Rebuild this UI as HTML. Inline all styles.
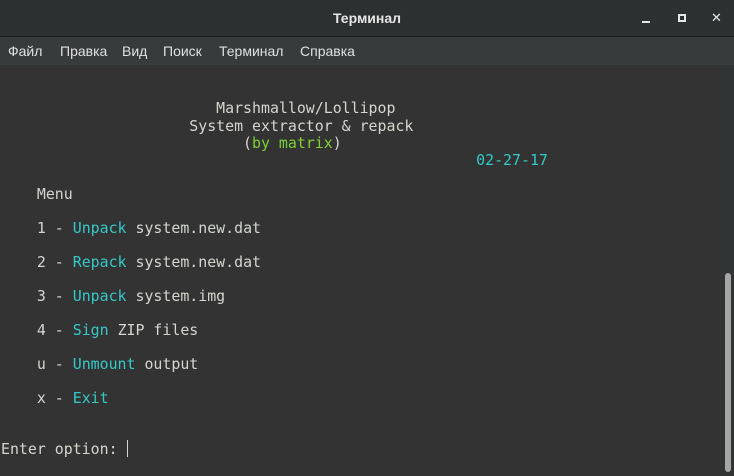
<!DOCTYPE html>
<html><head><meta charset="utf-8"><style>
*{margin:0;padding:0;box-sizing:border-box}
body{width:734px;height:475px;overflow:hidden;background:#333333;font-family:"Liberation Sans","DejaVu Sans",sans-serif;position:relative}
#title{position:absolute;left:0;top:0;width:734px;height:36px;background:#2d3031;color:#e6e6e6;font-size:14px;font-weight:bold;text-align:center;line-height:36px}
#title .t{position:absolute;left:0;right:0;text-align:center}
#sep{position:absolute;top:36px;left:0;width:734px;height:1px;background:#1c1e1f}
#menu{position:absolute;top:37px;left:0;width:734px;height:28px;background:#363b3c;color:#e0e0e0;font-size:14px;line-height:28px}
#menu span{position:absolute;top:0}
.wb{position:absolute;top:0;color:#e6e6e6}
#term{position:absolute;top:66px;left:0;width:722px;height:410px;font-family:"DejaVu Sans Mono","Liberation Mono",monospace;font-size:14.9px;color:#d3d7cf}
.l{position:absolute;left:1px;white-space:pre;line-height:17px}
.c{color:#34c9c9}.g{color:#7fd235}
#trough{position:absolute;left:722px;top:65px;width:12px;height:410px;background:#313435}
#thumb{position:absolute;left:725px;top:273px;width:6px;height:199px;border-radius:3px;background:#a4a7a6}
#cur{position:absolute;left:127px;top:440px;width:1px;height:17px;background:#d3d7cf}
</style></head><body>
<div id="title"><div class="t">Терминал</div>
<div style="position:absolute;left:642px;top:21px;width:8px;height:2px;background:#e6e6e6"></div>
<div style="position:absolute;left:678px;top:14px;width:8px;height:8px;border:2px solid #e6e6e6"></div>
<div class="wb" style="left:711px;font-size:13px">✕</div>
</div>
<div id="sep"></div>
<div id="menu"><span style="left:8px">Файл</span><span style="left:60px">Правка</span><span style="left:122px">Вид</span><span style="left:163px">Поиск</span><span style="left:219px">Терминал</span><span style="left:300px">Справка</span></div>
<div id="term">
<div class="l" style="top:34px">                        Marshmallow/Lollipop</div>
<div class="l" style="top:52px">                     System extractor &amp; repack</div>
<div class="l" style="top:69px">                           (<span class="g">by matrix</span>)</div>
<div class="l" style="top:86px">                                                     <span class="c">02-27-17</span></div>
<div class="l" style="top:120px">    Menu</div>
<div class="l" style="top:154px">    1 - <span class="c">Unpack</span> system.new.dat</div>
<div class="l" style="top:188px">    2 - <span class="c">Repack</span> system.new.dat</div>
<div class="l" style="top:222px">    3 - <span class="c">Unpack</span> system.img</div>
<div class="l" style="top:256px">    4 - <span class="c">Sign</span> ZIP files</div>
<div class="l" style="top:290px">    u - <span class="c">Unmount</span> output</div>
<div class="l" style="top:324px">    x - <span class="c">Exit</span></div>
<div class="l" style="top:375px">Enter option: </div>
</div>
<div id="cur"></div>
<div id="trough"></div>
<div id="thumb"></div>
</body></html>
